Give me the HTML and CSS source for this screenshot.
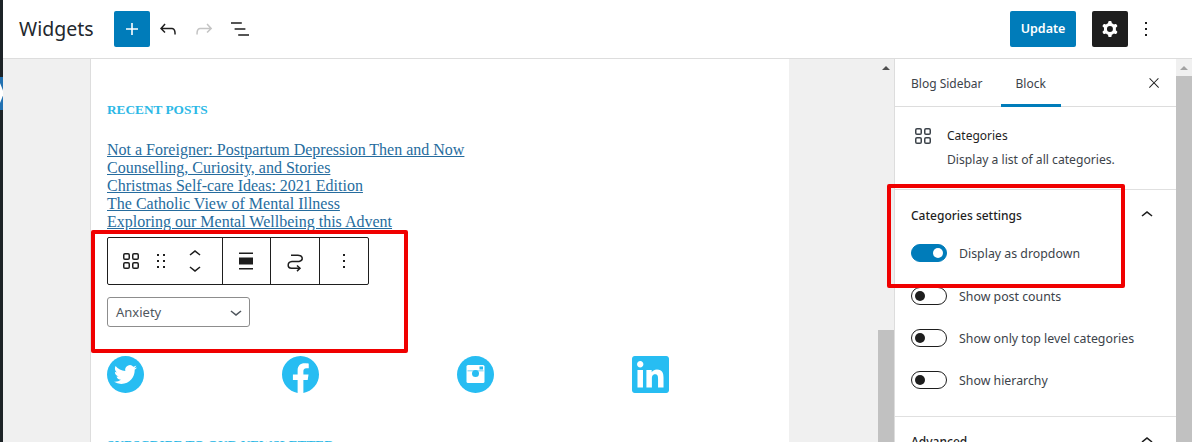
FILE: index.html
```html
<!DOCTYPE html>
<html>
<head>
    <meta charset="utf-8">
    <title>Widgets</title>
    <link rel="stylesheet" href="styles.css">
</head>
<body>
<div class="edge"><span class="edge-tab"></span></div>
<div class="app">
    <header class="topbar">
        <h1 class="title">Widgets</h1>
        <button class="btn-add"><svg class="icon-24" viewBox="0 0 24 24"><path d="M18 11.2h-5.2V6h-1.6v5.2H6v1.6h5.2V18h1.6v-5.2H18z"/></svg></button>
        <div class="tools">
            <svg class="icon-24" viewBox="0 0 24 24"><path d="M18.3 11.7c-.6-.6-1.4-.9-2.3-.9H6.7l2.9-3.3-1.1-1-4.5 5L8.5 16l1-1-2.7-2.7H16c.5 0 .9.2 1.3.5 1 1 1 3.4 1 4.5v.3h1.5v-.2c0-1.5 0-4.3-1.5-5.7z"/></svg>
            <svg class="icon-24 muted" viewBox="0 0 24 24"><path d="M15.6 6.5l-1.1 1 2.9 3.3H8c-.9 0-1.7.3-2.3.9-1.4 1.5-1.4 4.2-1.4 5.6v.2h1.5v-.3c0-1.1 0-3.5 1-4.5.3-.3.7-.5 1.3-.5h9.2L14.5 15l1.1 1.1 4.6-4.6-4.6-5z"/></svg>
            <svg class="icon-24" viewBox="0 0 24 24"><path d="M13.8 5.2H3v1.5h10.8V5.2zm-3.6 12v1.5H21v-1.5H10.2zm7.2-6H6.6v1.5h10.8v-1.5z"/></svg>
        </div>
        <div class="topbar-right">
            <button class="btn-update">Update</button>
            <button class="btn-gear"><svg class="icon-24" viewBox="0 0 24 24"><path fill-rule="evenodd" d="M10.289 4.836A1 1 0 0111.275 4h1.306a1 1 0 01.987.836l.244 1.466c.787.26 1.503.679 2.108 1.218l1.393-.522a1 1 0 011.216.437l.653 1.13a1 1 0 01-.23 1.273l-1.148.944a6.025 6.025 0 010 2.435l1.149.946a1 1 0 01.23 1.272l-.653 1.13a1 1 0 01-1.216.437l-1.394-.522c-.605.54-1.32.958-2.108 1.218l-.244 1.466a1 1 0 01-.987.836h-1.306a1 1 0 01-.986-.836l-.244-1.466a5.995 5.995 0 01-2.108-1.218l-1.394.522a1 1 0 01-1.217-.436l-.653-1.131a1 1 0 01.23-1.272l1.149-.946a6.026 6.026 0 010-2.435l-1.148-.944a1 1 0 01-.23-1.272l.653-1.131a1 1 0 011.217-.437l1.393.522a5.994 5.994 0 012.108-1.218l.244-1.466zM14.929 12a3 3 0 11-6 0 3 3 0 016 0z"/></svg></button>
            <svg class="icon-24 more" viewBox="0 0 24 24"><path d="M13 19h-2v-2h2v2zm0-6h-2v-2h2v2zm0-6h-2V5h2v2z"/></svg>
        </div>
    </header>

    <div class="main">
        <div class="gutter"></div>
        <section class="canvas">
            <h2 class="widget-title">Recent Posts</h2>
            <ul class="posts">
                <li><a href="#">Not a Foreigner: Postpartum Depression Then and Now</a></li>
                <li><a href="#">Counselling, Curiosity, and Stories</a></li>
                <li><a href="#">Christmas Self-care Ideas: 2021 Edition</a></li>
                <li><a href="#">The Catholic View of Mental Illness</a></li>
                <li><a href="#">Exploring our Mental Wellbeing this Advent</a></li>
            </ul>

            <div class="block-toolbar">
                <div class="tb-group tb-first">
                    <svg class="icon-24" viewBox="0 0 24 24"><path fill-rule="evenodd" d="M6 5.5h3a.5.5 0 01.5.5v3a.5.5 0 01-.5.5H6a.5.5 0 01-.5-.5V6a.5.5 0 01.5-.5zM4 6a2 2 0 012-2h3a2 2 0 012 2v3a2 2 0 01-2 2H6a2 2 0 01-2-2V6zm11-.5h3a.5.5 0 01.5.5v3a.5.5 0 01-.5.5h-3a.5.5 0 01-.5-.5V6a.5.5 0 01.5-.5zM13 6a2 2 0 012-2h3a2 2 0 012 2v3a2 2 0 01-2 2h-3a2 2 0 01-2-2V6zm5 8.5h-3a.5.5 0 00-.5.5v3a.5.5 0 00.5.5h3a.5.5 0 00.5-.5v-3a.5.5 0 00-.5-.5zM15 13a2 2 0 00-2 2v3a2 2 0 002 2h3a2 2 0 002-2v-3a2 2 0 00-2-2h-3zm-9 1.5h3a.5.5 0 01.5.5v3a.5.5 0 01-.5.5H6a.5.5 0 01-.5-.5v-3a.5.5 0 01.5-.5zM4 15a2 2 0 012-2h3a2 2 0 012 2v3a2 2 0 01-2 2H6a2 2 0 01-2-2v-3z"/></svg>
                    <svg class="icon-24 drag" viewBox="0 0 24 24"><path d="M8 7h2V5H8v2zm0 6h2v-2H8v2zm0 6h2v-2H8v2zm6-14v2h2V5h-2zm0 8h2v-2h-2v2zm0 6h2v-2h-2v2z"/></svg>
                    <div class="movers">
                        <svg class="icon-24" viewBox="0 3 24 16"><path d="M6.5 12.4L12 8l5.5 4.4-.9 1.2L12 10l-4.5 3.6-1-1.2z"/></svg>
                        <svg class="icon-24" viewBox="0 5 24 16"><path d="M17.5 11.6L12 16l-5.5-4.4.9-1.2L12 14l4.5-3.6 1 1.2z"/></svg>
                    </div>
                </div>
                <div class="tb-group">
                    <svg class="icon-24" viewBox="0 0 24 24"><path d="M5 3.5h14V5H5zM5 8.5h14v7H5zM5 19h14v1.5H5z"/></svg>
                </div>
                <div class="tb-group">
                    <svg class="icon-24 line-icon" viewBox="0 0 24 24"><path d="M8 6.2h6c6-.5 7 5 2 6.3H9c-5 .5-5 6.5-.5 6.8H17"/><path d="M14 16.5l3 2.8-3 2.8"/></svg>
                </div>
                <div class="tb-group">
                    <svg class="icon-24" viewBox="0 0 24 24"><path d="M13 19h-2v-2h2v2zm0-6h-2v-2h2v2zm0-6h-2V5h2v2z"/></svg>
                </div>
            </div>

            <div class="select">
                <span>Anxiety</span>
                <svg class="icon-24" viewBox="0 0 24 24"><path d="M17.5 11.6L12 16l-5.5-4.4.9-1.2L12 14l4.5-3.6 1 1.2z"/></svg>
            </div>

            <div class="social">
                <svg class="soc" viewBox="0 0 37 37"><circle cx="18.5" cy="18.5" r="18.5"/><path class="soc-white" transform="translate(7 7) scale(.96)" d="M23.953 4.57a10 10 0 01-2.825.775 4.958 4.958 0 002.163-2.723c-.951.555-2.005.959-3.127 1.184a4.92 4.92 0 00-8.384 4.482C7.69 8.095 4.067 6.13 1.64 3.162a4.822 4.822 0 00-.666 2.475c0 1.71.87 3.213 2.188 4.096a4.904 4.904 0 01-2.228-.616v.06a4.923 4.923 0 003.946 4.827 4.996 4.996 0 01-2.212.085 4.936 4.936 0 004.604 3.417 9.867 9.867 0 01-6.102 2.105c-.39 0-.779-.023-1.17-.067a13.995 13.995 0 007.557 2.209c9.053 0 13.998-7.496 13.998-13.985 0-.21 0-.42-.015-.63A9.935 9.935 0 0024 4.59z"/></svg>
                <svg class="soc" viewBox="0 0 24 24"><path d="M24 12.073c0-6.627-5.373-12-12-12s-12 5.373-12 12c0 5.99 4.388 10.954 10.125 11.854v-8.385H7.078v-3.47h3.047V9.43c0-3.007 1.792-4.669 4.533-4.669 1.312 0 2.686.235 2.686.235v2.953H15.83c-1.491 0-1.956.925-1.956 1.874v2.25h3.328l-.532 3.47h-2.796v8.385C19.612 23.027 24 18.062 24 12.073z"/></svg>
                <svg class="soc" viewBox="0 0 37 37"><circle cx="18.5" cy="18.5" r="18.5"/><rect class="soc-white" x="9.5" y="9" width="18" height="18" rx="1.5"/><rect x="10.5" y="14" width="16" height="1.5" opacity=".45"/><circle cx="18.5" cy="17.5" r="3.5"/><rect x="22.5" y="10.5" width="3.5" height="3"/></svg>
                <svg class="soc" viewBox="0 0 24 24"><path d="M20.447 20.452h-3.554v-5.569c0-1.328-.027-3.037-1.852-3.037-1.853 0-2.136 1.445-2.136 2.939v5.667H9.351V9h3.414v1.561h.046c.477-.9 1.637-1.85 3.37-1.85 3.601 0 4.267 2.37 4.267 5.455v6.286zM5.337 7.433c-1.144 0-2.063-.926-2.063-2.065 0-1.138.92-2.063 2.063-2.063 1.14 0 2.064.925 2.064 2.063 0 1.139-.925 2.065-2.064 2.065zm1.782 13.019H3.555V9h3.564v11.452zM22.225 0H1.771C.792 0 0 .774 0 1.729v20.542C0 23.227.792 24 1.771 24h20.451C23.2 24 24 23.227 24 22.271V1.729C24 .774 23.2 0 22.222 0h.003z"/></svg>
            </div>

            <h2 class="widget-title subscribe">Subscribe to our newsletter</h2>
            <div class="red-box red-toolbar"></div>
        </section>
        <div class="gutter-right"></div>
        <div class="scrollbar scrollbar-low"><span class="thumb"></span></div>

        <aside class="sidebar">
            <div class="tabs">
                <span class="tab">Blog Sidebar</span>
                <span class="tab tab-active">Block</span>
                <svg class="icon-24 close" viewBox="0 0 24 24"><path d="M13 11.8l6.1-6.3-1-1-6.1 6.2-6.1-6.2-1 1 6.1 6.3-6.5 6.7 1 1 6.5-6.6 6.5 6.6 1-1z"/></svg>
            </div>
            <div class="card">
                <svg class="icon-24" viewBox="0 0 24 24"><path fill-rule="evenodd" d="M6 5.5h3a.5.5 0 01.5.5v3a.5.5 0 01-.5.5H6a.5.5 0 01-.5-.5V6a.5.5 0 01.5-.5zM4 6a2 2 0 012-2h3a2 2 0 012 2v3a2 2 0 01-2 2H6a2 2 0 01-2-2V6zm11-.5h3a.5.5 0 01.5.5v3a.5.5 0 01-.5.5h-3a.5.5 0 01-.5-.5V6a.5.5 0 01.5-.5zM13 6a2 2 0 012-2h3a2 2 0 012 2v3a2 2 0 01-2 2h-3a2 2 0 01-2-2V6zm5 8.5h-3a.5.5 0 00-.5.5v3a.5.5 0 00.5.5h3a.5.5 0 00.5-.5v-3a.5.5 0 00-.5-.5zM15 13a2 2 0 00-2 2v3a2 2 0 002 2h3a2 2 0 002-2v-3a2 2 0 00-2-2h-3zm-9 1.5h3a.5.5 0 01.5.5v3a.5.5 0 01-.5.5H6a.5.5 0 01-.5-.5v-3a.5.5 0 01.5-.5zM4 15a2 2 0 012-2h3a2 2 0 012 2v3a2 2 0 01-2 2H6a2 2 0 01-2-2v-3z"/></svg>
                <div>
                    <div class="card-title">Categories</div>
                    <div class="card-desc">Display a list of all categories.</div>
                </div>
            </div>
            <div class="panel">
                <div class="panel-head">
                    <span>Categories settings</span>
                    <svg class="icon-24" viewBox="0 0 24 24"><path d="M6.5 12.4L12 8l5.5 4.4-.9 1.2L12 10l-4.5 3.6-1-1.2z"/></svg>
                </div>
                <div class="opt opt-first"><span class="toggle toggle-on"></span>Display as dropdown</div>
                <div class="opt"><span class="toggle"></span>Show post counts</div>
                <div class="opt"><span class="toggle"></span>Show only top level categories</div>
                <div class="opt"><span class="toggle"></span>Show hierarchy</div>
            </div>
            <div class="panel-head panel-closed">
                <span>Advanced</span>
                <svg class="icon-24" viewBox="0 0 24 24"><path d="M6.5 12.4L12 8l5.5 4.4-.9 1.2L12 10l-4.5 3.6-1-1.2z"/></svg>
            </div>
            <div class="red-box red-settings"></div>
        </aside>
        <div class="scrollbar scrollbar-high"><span class="thumb"></span></div>
    </div>
</div>
</body>
</html>
```

FILE: styles.css
```css
* {
    box-sizing: border-box;
}

body {
    margin: 0;
    height: 442px;
    width: 1192px;
    overflow: hidden;
    display: flex;
    background-color: #fff;
    color: #1e1e1e;
    font-family: "Noto Sans", sans-serif;
    font-size: 12px;
}

button {
    border: none;
    padding: 0;
    font-family: inherit;
}

.icon-24 {
    width: 24px;
    height: 24px;
    fill: currentColor;
    flex: none;
    display: block;
}

.muted {
    color: #c4c4c4;
}

.edge {
    width: 3px;
    background-color: #1d2327;
    padding-top: 77px;
    flex: none;
}

.edge-tab {
    display: block;
    height: 33px;
    background-color: #2271b1;
    overflow: hidden;
    position: relative;
}

.edge-tab::after {
    content: "";
    position: absolute;
    left: 0;
    top: 6px;
    border-left: 4px solid #fff;
    border-top: 10px solid transparent;
    border-bottom: 10px solid transparent;
}

.app {
    flex: 1;
    min-width: 0;
    display: flex;
    flex-direction: column;
}

.topbar {
    height: 59px;
    flex: none;
    display: flex;
    align-items: center;
    border-bottom: 1px solid #ddd;
    padding: 0 34px 1px 16px;
}

.title {
    margin: 0 20px 0 0;
    font-size: 19.5px;
    font-weight: 400;
    width: 75px;
    color: #23282d;
}

.btn-add {
    width: 36px;
    height: 36px;
    background-color: #007cba;
    color: #fff;
    border-radius: 2px;
    display: flex;
    align-items: center;
    justify-content: center;
}

.tools {
    display: flex;
    gap: 12px;
    margin-left: 6px;
}

.topbar-right {
    margin-left: auto;
    display: flex;
    align-items: center;
}

.btn-update {
    width: 66px;
    height: 36px;
    background-color: #007cba;
    color: #fff;
    border-radius: 2px;
    font-size: 12.5px;
    font-weight: 600;
    margin-right: 16px;
}

.btn-gear {
    width: 36px;
    height: 36px;
    background-color: #1e1e1e;
    color: #fff;
    border-radius: 2px;
    display: flex;
    align-items: center;
    justify-content: center;
    margin-right: 6px;
}

.main {
    flex: 1;
    min-height: 0;
    display: flex;
    overflow: hidden;
    background-color: #f0f0f0;
}

.gutter {
    width: 87px;
    flex: none;
}

.gutter-right {
    width: 89px;
    flex: none;
}

.canvas {
    width: 699px;
    flex: none;
    background-color: #fff;
    border-left: 1px solid #ddd;
    padding: 43px 16px 0;
    position: relative;
    font-family: "Liberation Serif", serif;
}

.widget-title {
    margin: 0;
    font-size: 13.3px;
    line-height: 16px;
    font-weight: 700;
    text-transform: uppercase;
    color: #2cb8e6;
}

.posts {
    list-style: none;
    margin: 23px 0 0;
    padding: 0;
    font-size: 16px;
    line-height: 18px;
}

.posts a {
    color: #266c9e;
}

.block-toolbar {
    width: 262px;
    height: 48px;
    margin-top: 6px;
    display: flex;
    border: 1px solid #1e1e1e;
    border-radius: 2px;
    font-family: "Noto Sans", sans-serif;
}

.tb-group {
    width: 49px;
    display: flex;
    align-items: center;
    justify-content: center;
    border-left: 1px solid #1e1e1e;
}

.tb-first {
    width: 114px;
    border-left: none;
    justify-content: flex-start;
    padding-left: 11px;
    gap: 6px;
}

.movers {
    display: flex;
    flex-direction: column;
    margin-left: 4px;
}

.movers .icon-24 {
    height: 16px;
    width: 24px;
}

.line-icon {
    fill: none;
    stroke: #1e1e1e;
    stroke-width: 1.5;
    overflow: visible;
}

.select {
    width: 143px;
    height: 30px;
    margin-top: 12px;
    border: 1px solid #8d8d8d;
    border-radius: 3px;
    display: flex;
    align-items: center;
    justify-content: space-between;
    padding: 0 1px 0 8px;
    font-family: "Noto Sans", sans-serif;
    font-size: 13px;
    color: #50575e;
}

.social {
    display: flex;
    margin-top: 29px;
    gap: 138px;
}

.soc {
    width: 37px;
    height: 37px;
    fill: #27bdf2;
    display: block;
    flex: none;
}

.soc-white {
    fill: #fff;
}

.subscribe {
    margin-top: 44px;
}

.red-box {
    position: absolute;
    border: 4px solid #f00000;
    border-radius: 2px;
    pointer-events: none;
}

.red-toolbar {
    left: 0;
    top: 171px;
    width: 317px;
    height: 123px;
}

.red-settings {
    left: -8px;
    top: 125px;
    width: 238px;
    height: 104px;
}

.scrollbar {
    width: 16px;
    flex: none;
    background-color: #f0f0f0;
    position: relative;
    display: flex;
    flex-direction: column;
}

.scrollbar::before {
    content: "";
    position: absolute;
    left: 4px;
    top: 7px;
    border-left: 4px solid transparent;
    border-right: 4px solid transparent;
    border-bottom: 4px solid #505050;
}

.thumb {
    display: block;
    flex: 1;
    background-color: #c1c1c1;
}

.scrollbar-low {
    padding-top: 271px;
}

.scrollbar-high {
    padding-top: 17px;
}

.scrollbar-high::before {
    border-bottom-color: #a3a3a3;
}

.sidebar {
    width: 282px;
    flex: none;
    background-color: #fff;
    border-left: 1px solid #ddd;
    position: relative;
    display: flex;
    flex-direction: column;
}

.tabs {
    height: 48px;
    flex: none;
    display: flex;
    align-items: center;
    border-bottom: 1px solid #ddd;
    padding-left: 16px;
    color: #3c434a;
    position: relative;
}

.tab {
    height: 47px;
    line-height: 49px;
}

.tab-active {
    margin-left: 33px;
    position: relative;
}

.tab-active::after {
    content: "";
    position: absolute;
    left: -15px;
    right: -15px;
    bottom: -1px;
    height: 3px;
    background-color: #007cba;
}

.close {
    position: absolute;
    right: 14px;
    top: 16px;
    width: 16px;
    height: 16px;
    color: #1e1e1e;
}

.card {
    height: 83px;
    flex: none;
    display: flex;
    gap: 12px;
    padding: 17px 16px 0 16px;
    border-bottom: 1px solid #e0e0e0;
    color: #3c434a;
}

.card-title {
    line-height: 24px;
    color: #1e1e1e;
}

.card-desc {
    margin-top: 2px;
    line-height: 20px;
    font-size: 12.15px;
}

.panel {
    height: 227px;
    flex: none;
    padding: 0 16px;
    border-bottom: 1px solid #e0e0e0;
}

.panel-head {
    height: 54px;
    flex: none;
    display: flex;
    align-items: center;
    justify-content: space-between;
    padding-bottom: 4px;
    margin-right: 1px;
    font-weight: 500;
    color: #1e1e1e;
}

.panel-closed {
    height: 48px;
    padding: 0 17px 0 16px;
    margin-right: 0;
}

.opt {
    height: 18px;
    margin-bottom: 24px;
    display: flex;
    align-items: center;
    gap: 12px;
    font-size: 12.35px;
    color: #3c434a;
}

.opt-first {
    margin-bottom: 25px;
}

.toggle {
    width: 36px;
    height: 18px;
    flex: none;
    border: 1px solid #1e1e1e;
    border-radius: 9px;
    position: relative;
}

.toggle::after {
    content: "";
    position: absolute;
    left: 3px;
    top: 3px;
    width: 10px;
    height: 10px;
    border-radius: 50%;
    background-color: #1e1e1e;
}

.toggle-on {
    background-color: #007cba;
    border-color: #007cba;
}

.toggle-on::after {
    left: 21px;
    background-color: #fff;
}
```
